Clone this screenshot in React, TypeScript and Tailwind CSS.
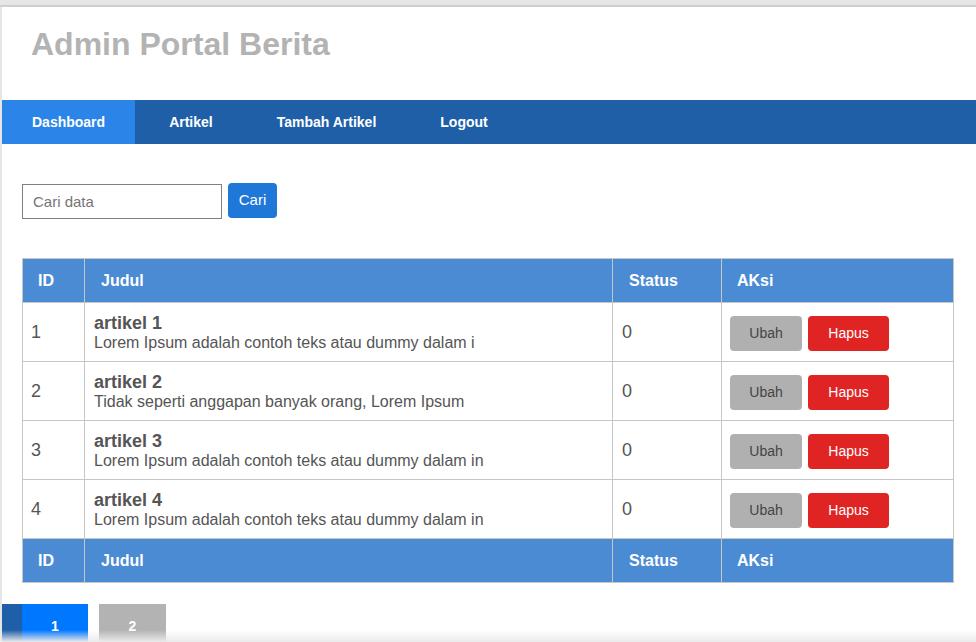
import React from 'react';

type Row = { id: number; title: string; desc: string; status: number };

const rows: Row[] = [
  { id: 1, title: 'artikel 1', desc: 'Lorem Ipsum adalah contoh teks atau dummy dalam i', status: 0 },
  { id: 2, title: 'artikel 2', desc: 'Tidak seperti anggapan banyak orang, Lorem Ipsum', status: 0 },
  { id: 3, title: 'artikel 3', desc: 'Lorem Ipsum adalah contoh teks atau dummy dalam in', status: 0 },
  { id: 4, title: 'artikel 4', desc: 'Lorem Ipsum adalah contoh teks atau dummy dalam in', status: 0 },
];

const menu = ['Dashboard', 'Artikel', 'Tambah Artikel', 'Logout'];

const HeadRow: React.FC = () => (
  <tr className="h-[44px] bg-[#4b8bd4] text-white font-bold text-[16px]">
    <th className="border border-[#c6c6c6] pl-[15px] text-left">ID</th>
    <th className="border border-[#c6c6c6] pl-[16px] text-left">Judul</th>
    <th className="border border-[#c6c6c6] pl-[16px] text-left">Status</th>
    <th className="border border-[#c6c6c6] pl-[15px] text-left">AKsi</th>
  </tr>
);

const App: React.FC = () => {
  return (
    <div className="relative h-[642px] w-full overflow-hidden bg-white font-['Liberation_Sans',Arial,sans-serif]">
      <div className="h-[5px] bg-[#e6e6e6]"></div>
      <div className="h-[2px] bg-[#cfcfcf]"></div>
      <div className="flex">
        <div className="w-[2px] self-stretch bg-[#e6e6e6]"></div>
        <div className="flex-1">
          {/* header */}
          <div className="h-[93px] pl-[29px] pt-[13px]">
            <h1 className="text-[32px] font-bold leading-normal text-[#b3b3b3]">Admin Portal Berita</h1>
          </div>

          {/* nav */}
          <nav className="flex h-[44px] gap-[4px] bg-[#1f5fa8]">
            {menu.map((m, i) => (
              <a
                key={m}
                href="#"
                className={
                  'flex items-center px-[30px] text-[14px] font-bold text-white ' +
                  (i === 0 ? 'bg-[#2b85e8]' : '')
                }
              >
                {m}
              </a>
            ))}
          </nav>

          {/* search */}
          <div className="ml-[20px] mt-[40px] flex items-center gap-[6px]">
            <input
              type="text"
              placeholder="Cari data"
              className="h-[35px] w-[200px] border border-[#808080] px-[10px] text-[15px] text-[#333] placeholder-[#757575] outline-none"
            />
            <button className="h-[35px] w-[49px] -translate-y-[1px] rounded-[4px] bg-[#1f78d8] text-[15px] text-white">
              Cari
            </button>
          </div>

          {/* table */}
          <table className="ml-[20px] mt-[39px] w-[931px] table-fixed border-collapse text-[#555]">
            <colgroup>
              <col className="w-[62px]" />
              <col className="w-[528px]" />
              <col className="w-[109px]" />
              <col className="w-[232px]" />
            </colgroup>
            <thead>
              <HeadRow />
            </thead>
            <tbody>
              {rows.map((r) => (
                <tr key={r.id} className="h-[59px]">
                  <td className="border border-[#c6c6c6] pl-[8px] text-[18px]">{r.id}</td>
                  <td className="border border-[#c6c6c6] pl-[9px]">
                    <div className="text-[18px] font-bold leading-[20px]">{r.title}</div>
                    <div className="text-[16px] leading-[19px]">{r.desc}</div>
                  </td>
                  <td className="border border-[#c6c6c6] pl-[9px] text-[18px]">{r.status}</td>
                  <td className="border border-[#c6c6c6] pl-[8px]">
                    <div className="flex gap-[6px] pt-[2px]">
                      <button className="h-[35px] w-[72px] rounded-[4px] bg-[#b0b0b0] text-[14px] text-[#444]">
                        Ubah
                      </button>
                      <button className="h-[35px] w-[81px] rounded-[4px] bg-[#e02424] text-[14px] text-white">
                        Hapus
                      </button>
                    </div>
                  </td>
                </tr>
              ))}
            </tbody>
            <tfoot>
              <HeadRow />
            </tfoot>
          </table>

          {/* pagination */}
          <div className="mt-[21px] flex">
            <div className="h-[44px] w-[20px] bg-[#1f5fa8]"></div>
            <a href="#" className="flex h-[44px] w-[66px] items-center justify-center bg-[#0077ff] text-[14px] font-bold text-white">
              1
            </a>
            <a href="#" className="ml-[11px] flex h-[44px] w-[67px] items-center justify-center bg-[#b3b3b3] text-[14px] font-bold text-white">
              2
            </a>
          </div>
        </div>
      </div>
      <div className="pointer-events-none absolute bottom-0 left-0 right-0 h-[12px] bg-gradient-to-b from-transparent to-[#ebebeb]"></div>
    </div>
  );
};

export default App;
